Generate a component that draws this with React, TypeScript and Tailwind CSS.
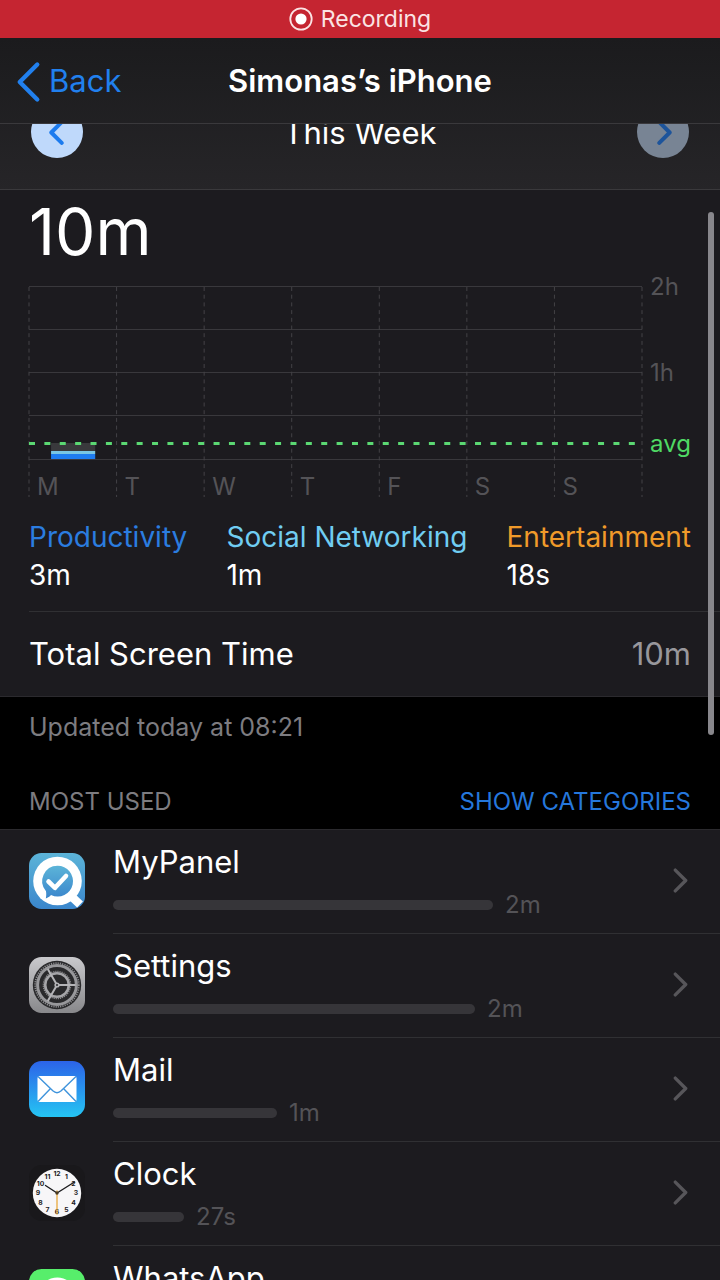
import type { ReactNode } from "react";

const days = ["M", "T", "W", "T", "F", "S", "S"];
const gridRows = [0, 43, 86, 129, 173];

const categories = [
  { name: "Productivity", time: "3m", color: "text-[#2b7de0]" },
  { name: "Social Networking", time: "1m", color: "text-[#70cdf2]" },
  { name: "Entertainment", time: "18s", color: "text-[#f09a2a]" },
];

function Chevron({ className, weight, flip }: { className: string; weight: number; flip?: boolean }) {
  return (
    <svg
      viewBox="0 0 14 24"
      className={className}
      fill="none"
      stroke="currentColor"
      strokeWidth={weight}
      strokeLinecap="round"
      strokeLinejoin="round"
      aria-hidden="true"
    >
      <path d={flip ? "M12 2 2 12l10 10" : "M2 2l10 10L2 22"} />
    </svg>
  );
}

function MyPanelIcon() {
  return (
    <svg viewBox="0 0 56 56" className="size-14" aria-hidden="true">
      <defs>
        <linearGradient id="panel" x1="0" y1="0" x2="0" y2="1">
          <stop offset="0" stopColor="#5cb4d8" />
          <stop offset="1" stopColor="#3a86cc" />
        </linearGradient>
      </defs>
      <rect width="56" height="56" rx="12.5" fill="url(#panel)" />
      <path d="M42 43l9 8.500" stroke="#fff" strokeWidth="8.5" />
      <circle cx="28.500" cy="28" r="24.300" fill="#fff" />
      <path
        d="M28.500 12.800a15.400 15.400 0 1 1-6.500 29.300c-1.500 1.700-3 2.700-5.200 3.400.5-2.400.6-4.600.2-7.200A15.400 15.400 0 0 1 28.500 12.800z"
        fill="url(#panel)"
      />
      <path d="M19.500 28.500l6.500 6.300L37 23" fill="none" stroke="#fff" strokeWidth="4.600" strokeLinecap="round" strokeLinejoin="round" />
    </svg>
  );
}

function SettingsIcon() {
  return (
    <svg viewBox="0 0 56 56" className="size-14" aria-hidden="true">
      <defs>
        <linearGradient id="metal" x1="0" y1="0" x2="0" y2="1">
          <stop offset="0" stopColor="#c9c9cc" />
          <stop offset="1" stopColor="#88888b" />
        </linearGradient>
      </defs>
      <rect width="56" height="56" rx="12.500" fill="url(#metal)" />
      <circle cx="28" cy="28" r="24.200" fill="#29292b" />
      <circle cx="28" cy="28" r="21.800" fill="none" stroke="#8a8a8d" strokeWidth="1.800" strokeDasharray="1.200 1.083" />
      <circle cx="28" cy="28" r="19.400" fill="none" stroke="#98989b" strokeWidth="3" />
      <circle cx="28" cy="28" r="11.800" fill="none" stroke="#a5a5a8" strokeWidth="2.600" />
      <circle cx="28" cy="28" r="13.600" fill="none" stroke="#8c8c8f" strokeWidth="1.400" strokeDasharray="1.200 0.935" />
      <g stroke="#b4b4b7" strokeWidth="2">
        <path d="M28 28h18.500M28 28l-9.250-16M28 28l-9.250 16" />
      </g>
      <circle cx="28" cy="28" r="2.600" fill="#b4b4b7" />
      <circle cx="28" cy="28" r="1" fill="#29292b" />
    </svg>
  );
}

function MailIcon() {
  return (
    <svg viewBox="0 0 56 56" className="size-14" aria-hidden="true">
      <defs>
        <linearGradient id="mail" x1="0" y1="0" x2="0" y2="1">
          <stop offset="0" stopColor="#2c63e8" />
          <stop offset="1" stopColor="#25c5f3" />
        </linearGradient>
      </defs>
      <rect width="56" height="56" rx="12.500" fill="url(#mail)" />
      <rect x="8.500" y="15" width="39" height="26" rx="2" fill="#fff" />
      <g fill="none" stroke="#3f94dc" strokeWidth="1.400">
        <path d="M9 15.500l14.800 14.300c2.500 2.300 5.900 2.300 8.400 0L47 15.500" />
        <path d="M9 40.500l12.300-12.800M47 40.500L34.700 27.700" />
      </g>
    </svg>
  );
}

function ClockIcon() {
  const numbers = Array.from({ length: 12 }, (_, i) => {
    const angle = ((i + 1) * Math.PI) / 6;
    return { n: i + 1, x: 28 + 19 * Math.sin(angle), y: 30.4 - 19 * Math.cos(angle) };
  });
  return (
    <svg viewBox="0 0 56 56" className="size-14" aria-hidden="true">
      <rect width="56" height="56" rx="12.500" fill="#19181b" />
      <circle cx="28" cy="28" r="24.200" fill="#f7f6f8" />
      {numbers.map(({ n, x, y }) => (
        <text key={n} x={x} y={y} fontSize="6.8" fontWeight="700" textAnchor="middle" fill="#1c1c1e">
          {n}
        </text>
      ))}
      <g strokeLinecap="round">
        <path d="M28 28L16.500 20.500M28 28l17.500-11" stroke="#1c1c1e" strokeWidth="1.400" />
        <path d="M28 26v23" stroke="#e9a93c" strokeWidth="1.300" />
      </g>
      <circle cx="28" cy="28" r="1.700" fill="#4a3b22" />
    </svg>
  );
}

function WhatsAppIcon() {
  return (
    <svg viewBox="0 0 56 56" className="size-14" aria-hidden="true">
      <rect width="56" height="56" rx="12.500" fill="#57ee6b" />
      <path d="M8.500 47.500l2.800-10A19.500 19.500 0 1 1 18.700 45z" fill="#fff" />
      <circle cx="28.200" cy="27.700" r="16" fill="#3fdc58" />
      <path
        d="M22 18.500c-1.800 0-3.700 2-3.500 5 .4 6 7.500 13.500 14.500 14 3 .2 5-1.800 5-4.500l-5.500-3-2.500 2.700c-2.600-1-5.200-3.500-6.200-6l2.400-2.400-2.700-5.500z"
        fill="#fff"
      />
    </svg>
  );
}

const apps: { name: string; time: string; bar: string; icon: ReactNode }[] = [
  { name: "MyPanel", time: "2m", bar: "w-[380px]", icon: <MyPanelIcon /> },
  { name: "Settings", time: "2m", bar: "w-[362px]", icon: <SettingsIcon /> },
  { name: "Mail", time: "1m", bar: "w-[164px]", icon: <MailIcon /> },
  { name: "Clock", time: "27s", bar: "w-[71px]", icon: <ClockIcon /> },
  { name: "WhatsApp", time: "20s", bar: "w-[52px]", icon: <WhatsAppIcon /> },
];

function UsageChart() {
  return (
    <div className="flex pl-[29px] text-[24px] leading-[30px] text-[#545357]">
      <div className="relative mt-[14px] h-[216px] flex-1">
        <svg className="absolute inset-0 size-full overflow-visible" aria-hidden="true">
          <g stroke="#39383c">
            {gridRows.map((y) => (
              <line key={y} x1="0" x2="100%" y1={y + 0.5} y2={y + 0.5} />
            ))}
          </g>
          <g stroke="#434246" strokeDasharray="4 3.7">
            {[...days, ""].map((_, i) => (
              <line key={i} x1={`${(i * 100) / 7}%`} x2={`${(i * 100) / 7}%`} y1="1" y2="211" />
            ))}
          </g>
          <rect x="3.600%" y="157" width="7.200%" height="8" fill="#39393c" />
          <rect x="3.600%" y="165" width="7.200%" height="3" fill="#79c6e4" />
          <rect x="3.600%" y="168" width="7.200%" height="5" fill="#1f7cf0" />
          <line x1="0" x2="99.300%" y1="157.500" y2="157.500" stroke="#5bd873" strokeWidth="3" strokeDasharray="6 9.380" />
        </svg>
        <div className="grid h-full grid-cols-7 items-end">
          {days.map((d, i) => (
            <span key={i} className="pl-2">
              {d}
            </span>
          ))}
        </div>
      </div>
      <div className="flex w-[78px] flex-col pl-2">
        <span>2h</span>
        <span className="mt-14">1h</span>
        <span className="mt-[41px] text-[#4fd964]">avg</span>
      </div>
    </div>
  );
}

export default function App() {
  return (
    <div className="flex h-screen flex-col overflow-hidden bg-black font-['Inter',sans-serif] text-white">
      <div className="flex h-[38px] shrink-0 items-center justify-center gap-2 bg-[#c52531] text-[23px] text-[#fbe3e4]">
        <svg viewBox="0 0 24 24" className="size-6" aria-hidden="true">
          <circle cx="12" cy="12" r="10.700" fill="none" stroke="currentColor" strokeWidth="1.800" />
          <circle cx="12" cy="12" r="5.600" fill="#fff" />
        </svg>
        Recording
      </div>

      <header className="shrink-0 bg-linear-to-b from-[#1b1b1d] to-[#262528]">
        <div className="grid h-[86px] grid-cols-[1fr_auto_1fr] items-center border-b border-[#3a393c] px-4 pt-[2px]">
          <button type="button" className="flex items-center gap-2 justify-self-start text-[31px] text-[#2180ee]">
            <Chevron flip weight={2.5} className="h-[42px] w-[25px]" />
            Back
          </button>
          <h1 className="text-[31px] font-semibold">Simonas’s iPhone</h1>
        </div>
        <div className="flex h-[66px] items-end justify-between overflow-hidden border-b border-[#3a393c] px-[31px] pb-[31px]">
          <button
            type="button"
            aria-label="Previous week"
            className="flex size-[52px] shrink-0 items-center justify-center rounded-full bg-[#bfd9fb] text-[#1c7bee]"
          >
            <Chevron flip weight={3.8} className="mr-[2px] h-[25px] w-[15px]" />
          </button>
          <span className="text-[31px] leading-[50px]">This Week</span>
          <button
            type="button"
            aria-label="Next week"
            className="flex size-[52px] shrink-0 items-center justify-center rounded-full bg-[#788494] text-[#1d549b]"
          >
            <Chevron weight={3.8} className="ml-[2px] h-[25px] w-[15px]" />
          </button>
        </div>
      </header>

      <div className="relative min-h-0 flex-1">
        <main className="h-full overflow-y-auto [scrollbar-width:none]">
          <section className="border-b border-[#2b2a2e] bg-[#1c1b1f]">
            <p className="px-[29px] pt-[10px] pb-2 text-[64px] leading-[64px]">10m</p>
            <UsageChart />
            <dl className="ml-[29px] flex justify-between border-b border-[#303033] pt-4 pr-[29px] pb-[17px] text-[28px] leading-[38px]">
              {categories.map((c) => (
                <div key={c.name}>
                  <dt className={c.color}>{c.name}</dt>
                  <dd>{c.time}</dd>
                </div>
              ))}
            </dl>
            <div className="flex h-[84px] items-center justify-between px-[29px] text-[31px]">
              <span>Total Screen Time</span>
              <span className="text-[#98979c]">10m</span>
            </div>
          </section>

          <p className="px-[29px] pt-[15px] text-[25px] leading-[30px] text-[#7d7c80]">Updated today at 08:21</p>
          <div className="flex justify-between px-[29px] pt-[45px] pb-3 text-[24px] leading-[30px]">
            <h2 className="text-[#7d7c80]">MOST USED</h2>
            <button type="button" className="text-[#2577dc]">
              SHOW CATEGORIES
            </button>
          </div>

          <ul className="border-t border-[#2b2a2e] bg-[#1c1b1f]">
            {apps.map((app) => (
              <li key={app.name}>
                <a href="#" className="flex items-center pl-[29px]">
                  <span className="pb-[2px]">{app.icon}</span>
                  <div className="ml-[28px] flex h-[104px] flex-1 items-center border-b border-[#303033] pr-8 pb-[3px]">
                    <div className="flex-1">
                      <div className="text-[31px] leading-[44px]">{app.name}</div>
                      <div className="mt-[6px] flex items-center gap-3 text-[24px] leading-[30px] text-[#545357]">
                        <span className={`h-[10px] rounded-full bg-[#363539] ${app.bar}`} />
                        {app.time}
                      </div>
                    </div>
                    <Chevron weight={3.2} className="h-[25px] w-[15px] text-[#57565a]" />
                  </div>
                </a>
              </li>
            ))}
          </ul>
        </main>
        <div className="pointer-events-none absolute top-[22px] right-[6px] h-[523px] w-[6px] rounded-full bg-[#88878c]" />
      </div>
    </div>
  );
}
